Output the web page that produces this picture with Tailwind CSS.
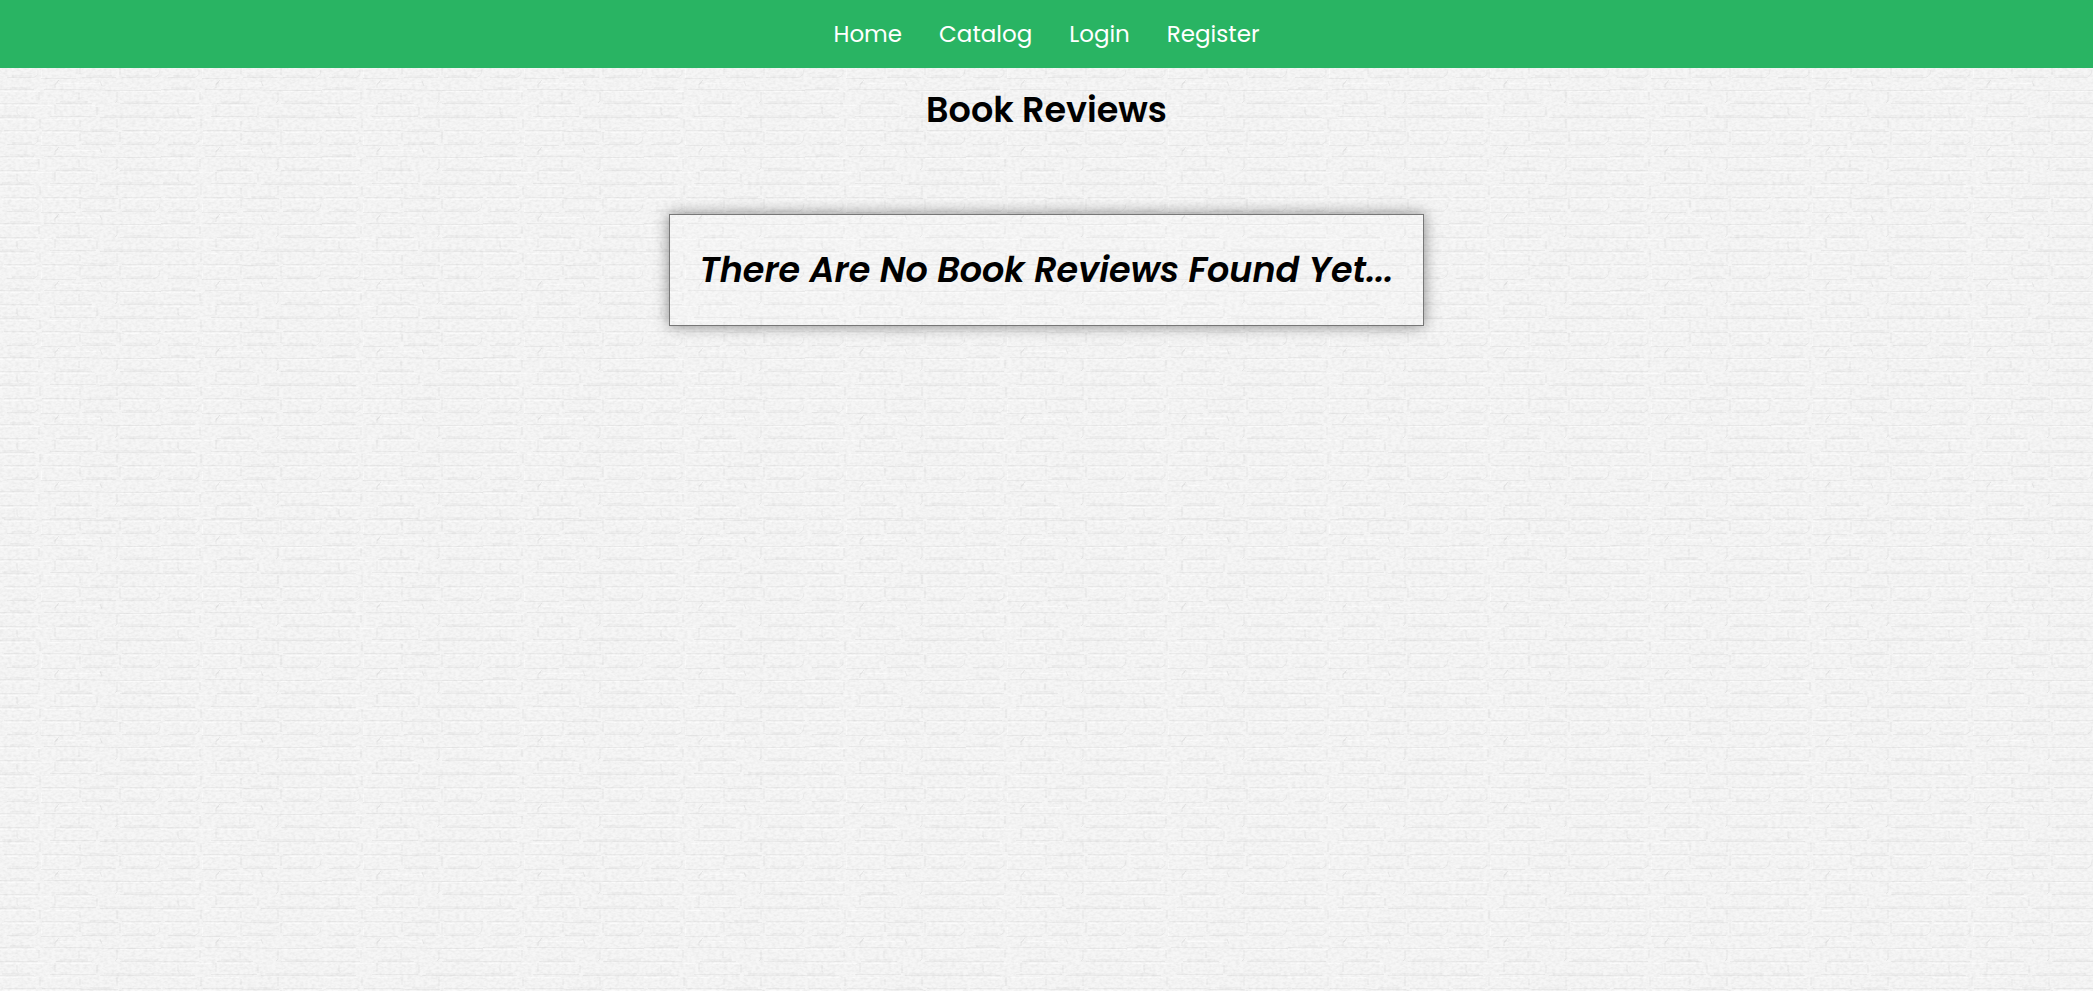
<!DOCTYPE html>
<html lang="en">
<head>
<meta charset="utf-8">
<meta name="viewport" content="width=device-width, initial-scale=1">
<title>Book Reviews</title>
<script src="https://cdn.jsdelivr.net/npm/@tailwindcss/browser@4"></script>
</head>
<body class="relative isolate min-h-screen bg-[#f6f6f6] font-[Poppins,Inter,sans-serif] text-black">
  <!-- Brick wall texture -->
  <svg class="absolute inset-0 -z-10 h-full w-full" aria-hidden="true">
    <defs>
      <filter id="grain" x="0" y="0" width="100%" height="100%" color-interpolation-filters="sRGB">
        <feTurbulence type="fractalNoise" baseFrequency="0.25 0.4" numOctaves="2" seed="4"/>
        <feColorMatrix values="0 0 0 0 0  0 0 0 0 0  0 0 0 0 0  0.1 0 0 0 -0.037"/>
      </filter>
      <pattern id="bricks" width="161" height="67" patternUnits="userSpaceOnUse">
        <g fill="none" stroke="#ebebeb">
          <path d="M0 9.5H34M44 9.5H82l30 1h49M0 23.5H38M56 23.5H92M120 23.5h41M0 37.5H34M50 36.5H96M100 37.5h61M4 50.5H36M42 50.5H78l6 1h34M122 50.5h39M7 64.5H34l4-3V57M41 65.5H76M82 64.5h34M122 64.5h33l4-3 1-5"/>
          <path d="M17 27v6l2 3M55 25v9M97 27v8M40 39v9M80 41v6M117 39v9M39 12v8M79 13v7M117 12v9l-2 2M80 53v8M120 52v10M54 75l2-5M55 5l3-3M55 8V4l4-4M100 1l2 5" stroke="#e8e8e8"/>
          <path d="M10 8h20M60 22h28M124 22h34M2 36h28M104 36h50M90 50h24M12 63h20M86 63h26M126 63h26" stroke="#f0f0f0" stroke-width="2"/>
        </g>
        <path d="M0 11.5H40M120 11.5h40M0 25.5H52M60 25.5H95M0 39.5H36M44 39.5h34M2 52.5H36M42 52.5h36M124 52.5h34M41.5 56v9M60 3.5h40" fill="none" stroke="#fbfbfb"/>
      </pattern>
      <pattern id="bricks-top" href="#bricks" patternTransform="translate(0 13)"/>
    </defs>
    <rect y="519" width="100%" height="100%" fill="url(#bricks)"/>
    <rect width="100%" height="519" fill="url(#bricks-top)"/>
    <rect width="100%" height="100%" filter="url(#grain)"/>
  </svg>
  <header class="bg-[#29b463]">
    <nav class="flex h-17 items-center justify-center gap-[37px] text-[23px] text-white">
      <a href="#">Home</a>
      <a href="#">Catalog</a>
      <a href="#">Login</a>
      <a href="#">Register</a>
    </nav>
  </header>
  <main class="flex flex-col items-center px-4 pt-4">
    <h1 class="text-[35px] leading-[52px] font-semibold">Book Reviews</h1>
    <section class="mt-[78px] border border-[#777] bg-white/10 px-[30px] py-7 shadow-[0_0_14px_rgba(0,0,0,0.45)]">
      <h2 class="text-[35px] leading-[54px] font-semibold italic">There Are No Book Reviews Found Yet...</h2>
    </section>
  </main>
</body>
</html>
